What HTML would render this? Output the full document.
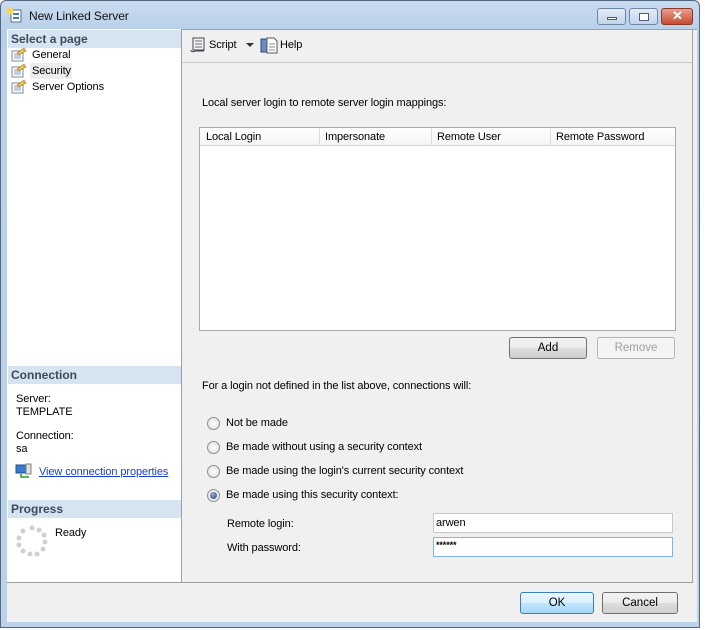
<!DOCTYPE html>
<html><head><style>
*{margin:0;padding:0;box-sizing:border-box}
body{width:705px;height:630px;overflow:hidden;font-family:"Liberation Sans",sans-serif;font-size:11px;color:#000;background:#fff;position:relative}
.a{position:absolute}
.frame{left:0;top:0;width:700px;height:628px;background:linear-gradient(#c9dbef,#b9d0ea 30px,#bcd2ea);border:1px solid #54687f;border-radius:6px 6px 0 0}
.t{font-size:11px;white-space:nowrap;letter-spacing:-0.1px;margin-top:1px}
.hdr{background:#d6e3f1;font-weight:bold;color:#3c4a5c;height:18px;line-height:18px;padding-left:3px;font-size:12px}
.btn{border:1px solid #707070;border-radius:3px;background:linear-gradient(#f2f2f2,#ebebeb 50%,#dddddd 51%,#cfcfcf);text-align:center;line-height:20px;height:22px;font-size:11.5px}
.radio{width:13px;height:13px;border-radius:50%;border:1px solid #8e8f8f;background:radial-gradient(#fff,#dcdcdc)}
.in{background:#fff;border:1px solid #c8c8c8;height:20px;line-height:18px;padding-left:2px;margin-top:0}
</style></head><body>
<div class="a frame"></div>
<div class="a" style="left:6px;top:7px;width:18px;height:16px">
<svg width="18" height="16"><rect x="5" y="3" width="10" height="12" fill="#fff" stroke="#5a6e8a"/><rect x="7" y="6" width="6" height="2" fill="#4a78c0"/><rect x="7" y="10" width="6" height="2" fill="#4a78c0"/><circle cx="4" cy="4" r="3.5" fill="#f7d850"/></svg></div>
<div class="a t" style="left:29px;top:8px;font-size:12px;color:#111">New Linked Server</div>
<div class="a" style="left:597px;top:8px;width:29px;height:17px;border:1px solid #6e86a4;border-radius:3px;background:linear-gradient(#e3ecf7,#c5d5ea)"><div class="a" style="left:9px;top:8px;width:10px;height:3px;background:#fff;border:1px solid #4a5e7a"></div></div>
<div class="a" style="left:629px;top:8px;width:29px;height:17px;border:1px solid #6e86a4;border-radius:3px;background:linear-gradient(#e3ecf7,#c5d5ea)"><div class="a" style="left:9px;top:4px;width:10px;height:8px;background:#fff;border:1px solid #4a5e7a"></div></div>
<div class="a" style="left:661px;top:8px;width:32px;height:17px;border:1px solid #8a3a2a;border-radius:3px;background:linear-gradient(#e8a090,#c84a30)"><div class="a" style="left:10px;top:-1px;color:#fff;font-weight:bold;font-size:13px">✕</div></div>
<div class="a" style="left:7px;top:29px;width:690px;height:593px;background:#f0f0f0;border-top:1px solid #8ea4c0"></div>
<div class="a" style="left:7px;top:29px;width:175px;height:554px;background:#fff;border-right:1px solid #a0a0a0;border-bottom:1px solid #a0a0a0"></div>
<div class="a hdr" style="left:8px;top:30px;width:173px">Select a page</div>
<svg class="a" style="left:11px;top:47px" width="16" height="48">
<g><rect x="1" y="4" width="11" height="10" fill="#fff" stroke="#7a8ca0"/><path d="M3 7h7M3 9h7M3 11h7" stroke="#8aa0c0"/><path d="M6 6l7-5 2 3-7 4z" fill="#e8c050" stroke="#9a7a20" stroke-width=".6"/></g>
<g transform="translate(0,16)"><rect x="1" y="4" width="11" height="10" fill="#fff" stroke="#7a8ca0"/><path d="M3 7h7M3 9h7M3 11h7" stroke="#8aa0c0"/><path d="M6 6l7-5 2 3-7 4z" fill="#e8c050" stroke="#9a7a20" stroke-width=".6"/></g>
<g transform="translate(0,32)"><rect x="1" y="4" width="11" height="10" fill="#fff" stroke="#7a8ca0"/><path d="M3 7h7M3 9h7M3 11h7" stroke="#8aa0c0"/><path d="M6 6l7-5 2 3-7 4z" fill="#e8c050" stroke="#9a7a20" stroke-width=".6"/></g>
</svg>
<div class="a t" style="left:32px;top:48px">General</div>
<div class="a" style="left:30px;top:63px;width:42px;height:16px;background:#ececec"></div>
<div class="a t" style="left:32px;top:64px">Security</div>
<div class="a t" style="left:32px;top:80px">Server Options</div>
<div class="a hdr" style="left:8px;top:366px;width:173px">Connection</div>
<div class="a t" style="left:16px;top:392px">Server:</div>
<div class="a t" style="left:16px;top:405px">TEMPLATE</div>
<div class="a t" style="left:16px;top:429px">Connection:</div>
<div class="a t" style="left:16px;top:442px">sa</div>
<svg class="a" style="left:15px;top:463px" width="18" height="16"><rect x="1" y="2" width="10" height="8" fill="#3a7ad0" stroke="#204a90"/><rect x="11" y="1" width="5" height="10" fill="#e0e0e0" stroke="#808080"/><path d="M6 11v3h8" stroke="#2a9a2a" stroke-width="1.5" fill="none"/></svg>
<div class="a t" style="left:39px;top:465px;color:#1a3fcc;text-decoration:underline">View connection properties</div>
<div class="a hdr" style="left:8px;top:500px;width:173px">Progress</div>
<svg class="a" style="left:16px;top:525px" width="32" height="32"><g fill="#d0d0d0">
<circle cx="16" cy="3" r="2.5"/><circle cx="23" cy="5" r="2.5"/><circle cx="28" cy="10" r="2.5"/><circle cx="29" cy="17" r="2.5"/><circle cx="27" cy="24" r="2.5"/><circle cx="21" cy="29" r="2.5"/><circle cx="14" cy="29" r="2.5"/><circle cx="7" cy="26" r="2.5"/><circle cx="3" cy="20" r="2.5"/><circle cx="3" cy="13" r="2.5"/><circle cx="7" cy="6" r="2.5"/></g></svg>
<div class="a t" style="left:55px;top:526px">Ready</div>
<div class="a" style="left:182px;top:29px;width:511px;height:554px;border-right:1px solid #a0a0a0;border-bottom:1px solid #a0a0a0"></div>
<div class="a" style="left:182px;top:62px;width:510px;height:1px;background:#c8c8c8"></div>
<svg class="a" style="left:189px;top:36px" width="18" height="18"><path d="M4 2h11v12H4z" fill="#f4f4f4" stroke="#445" /><path d="M2 14c0 2 3 2 4 1h9" fill="none" stroke="#445"/><path d="M6 5h7M6 8h7M6 11h7" stroke="#667"/></svg>
<div class="a t" style="left:209px;top:38px">Script</div>
<div class="a" style="left:246px;top:43px;width:0;height:0;border-left:4px solid transparent;border-right:4px solid transparent;border-top:4px solid #333"></div>
<svg class="a" style="left:260px;top:36px" width="18" height="18"><rect x="1" y="3" width="8" height="13" fill="#6a8ac0" stroke="#2a4a80"/><path d="M7 2h7l3 3v12H7z" fill="#fff" stroke="#556"/><path d="M9 8h6M9 11h6M9 14h6" stroke="#889"/></svg>
<div class="a t" style="left:280px;top:38px">Help</div>
<div class="a t" style="left:202px;top:96px">Local server login to remote server login mappings:</div>
<div class="a" style="left:199px;top:127px;width:477px;height:204px;background:#fff;border:1px solid #a8a8a8"></div>
<div class="a" style="left:200px;top:128px;width:475px;height:18px;background:linear-gradient(#fff,#f3f4f6);border-bottom:1px solid #d5d5d5"></div>
<div class="a" style="left:319px;top:128px;width:1px;height:18px;background:#dcdcdc"></div>
<div class="a" style="left:431px;top:128px;width:1px;height:18px;background:#dcdcdc"></div>
<div class="a" style="left:550px;top:128px;width:1px;height:18px;background:#dcdcdc"></div>
<div class="a t" style="left:206px;top:130px">Local Login</div>
<div class="a t" style="left:325px;top:130px">Impersonate</div>
<div class="a t" style="left:437px;top:130px">Remote User</div>
<div class="a t" style="left:556px;top:130px">Remote Password</div>
<div class="a btn" style="left:509px;top:337px;width:78px">Add</div>
<div class="a btn" style="left:597px;top:337px;width:78px;border-color:#b5b5b5;background:#f4f4f4;color:#a0a0a0">Remove</div>
<div class="a t" style="left:202px;top:379px">For a login not defined in the list above, connections will:</div>
<div class="a radio" style="left:207px;top:417px"></div><div class="a t" style="left:226px;top:416px">Not be made</div>
<div class="a radio" style="left:207px;top:441px"></div><div class="a t" style="left:226px;top:440px">Be made without using a security context</div>
<div class="a radio" style="left:207px;top:465px"></div><div class="a t" style="left:226px;top:464px">Be made using the login's current security context</div>
<div class="a radio" style="left:207px;top:489px"><div class="a" style="left:2px;top:2px;width:7px;height:7px;border-radius:50%;background:radial-gradient(circle at 40% 35%,#9ad,#1a3e70)"></div></div>
<div class="a t" style="left:226px;top:488px">Be made using this security context:</div>
<div class="a t" style="left:227px;top:517px">Remote login:</div>
<div class="a t" style="left:227px;top:541px">With password:</div>
<div class="a in t" style="left:433px;top:513px;width:240px">arwen</div>
<div class="a in t" style="left:433px;top:537px;width:240px;border-color:#7eb4ea;font-size:9px;font-weight:bold;line-height:14px">******</div>
<div class="a btn" style="left:520px;top:592px;width:74px;border-color:#3c7fb1;background:linear-gradient(#eaf6fd,#d9f0fc 50%,#bee6fd 51%,#a7d9f5)">OK</div>
<div class="a btn" style="left:602px;top:592px;width:76px">Cancel</div>
</body></html>
